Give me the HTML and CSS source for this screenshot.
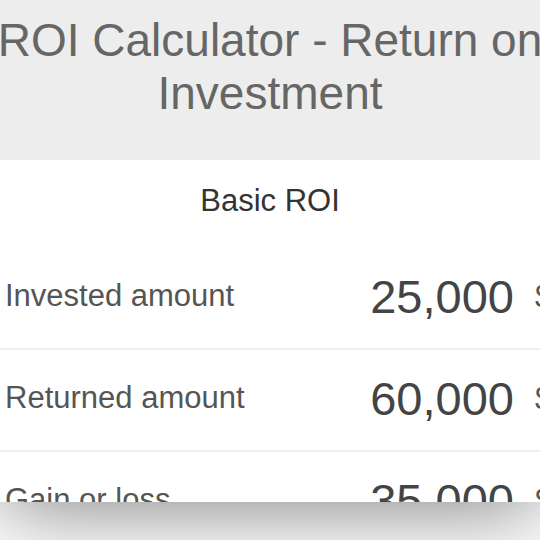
FILE: index.html
```html
<!DOCTYPE html>
<html lang="en">
<head>
<meta charset="utf-8">
<title>ROI Calculator</title>
<link rel="stylesheet" href="styles.css">
</head>
<body>
<div class="page">
  <header class="top">
    <h1 class="title">ROI Calculator - Return on Investment</h1>
  </header>
  <section class="calc">
    <h2 class="calc-title">Basic ROI</h2>
    <div class="row">
      <span class="label">Invested amount</span>
      <span class="value">25,000</span>
      <span class="unit">$</span>
    </div>
    <div class="row">
      <span class="label">Returned amount</span>
      <span class="value">60,000</span>
      <span class="unit">$</span>
    </div>
    <div class="row">
      <span class="label">Gain or loss</span>
      <span class="value">35,000</span>
      <span class="unit">$</span>
    </div>
  </section>
</div>
</body>
</html>
```
FILE: styles.css
```css
html, body {
  margin: 0;
  padding: 0;
  background: #ffffff;
  overflow: hidden;
  height: 540px;
}
body {
  font-family: "Liberation Sans", Arial, Helvetica, sans-serif;
}
.page {
  height: 502px;
  overflow: hidden;
  background: #ffffff;
  box-shadow: 0 6px 80px rgba(0, 0, 0, 0.5);
  position: relative;
}
.top {
  background: #ededed;
  height: 160px;
  box-sizing: border-box;
  padding-top: 14px;
}
.title {
  margin: 0 -30px;
  font-size: 46px;
  line-height: 53px;
  font-weight: normal;
  color: #666666;
  text-align: center;
}
.calc-title {
  margin: 0;
  padding: 23px 0 29px;
  font-size: 31px;
  line-height: 36px;
  font-weight: normal;
  color: #333333;
  text-align: center;
}
.row {
  display: flex;
  align-items: center;
  height: 100px;
  border-bottom: 2px solid #eeeeee;
  padding-left: 5px;
  margin-right: -45px;
}
.label {
  flex: 1;
  font-size: 31px;
  color: #555555;
  padding-bottom: 5px;
}
.value {
  font-size: 47px;
  color: #444444;
  padding-bottom: 3px;
}
.unit {
  width: 50px;
  margin-left: 21px;
  font-size: 31px;
  color: #555555;
  padding-bottom: 3px;
}
```
